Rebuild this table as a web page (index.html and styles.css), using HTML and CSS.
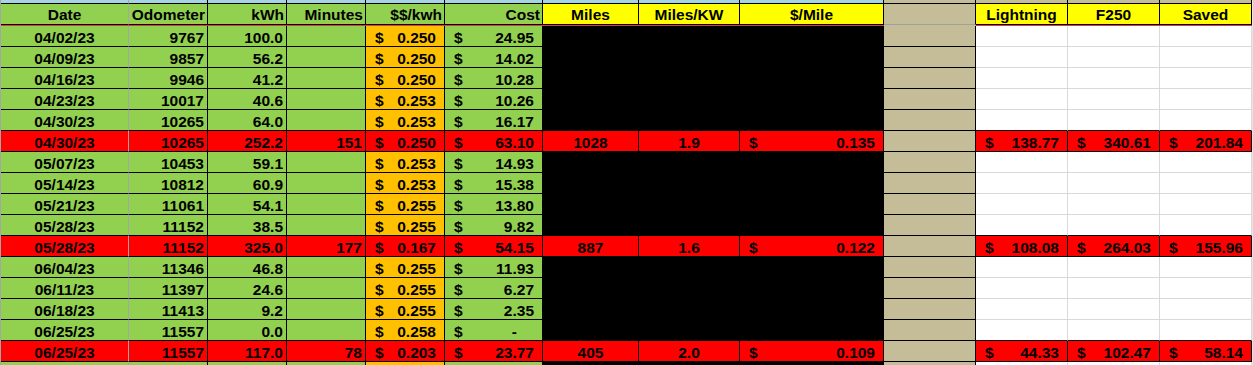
FILE: index.html
```html
<!DOCTYPE html>
<html>
<head>
<meta charset="utf-8">
<link rel="stylesheet" href="styles.css">
</head>
<body>
<div class="sheet">
  <div class="row strip">
    <div class="c first blue"></div><div class="c blue"></div><div class="c blue"></div><div class="c blue"></div><div class="c blue"></div><div class="c blue"></div><div class="c blue"></div><div class="c blue"></div><div class="c blue"></div><div class="c tan"></div><div class="c tan"></div><div class="c tan"></div><div class="c tan"></div>
  </div>
  <div class="row head">
    <div class="c first green ctr">Date</div>
    <div class="c green rt">Odometer</div>
    <div class="c green rt">kWh</div>
    <div class="c green rt">Minutes</div>
    <div class="c green rt">$$/kwh</div>
    <div class="c green rt">Cost</div>
    <div class="c yellow ctr">Miles</div>
    <div class="c yellow ctr">Miles/KW</div>
    <div class="c yellow ctr">$/Mile</div>
    <div class="c tan hj"></div>
    <div class="c yellow ctr">Lightning</div>
    <div class="c yellow ctr">F250</div>
    <div class="c yellow ctr">Saved</div>
  </div>
  <div class="row redline">
    <div class="ln"></div><div class="ln"></div><div class="ln"></div><div class="ln"></div><div class="ln"></div><div class="ln"></div><div class="ln"></div><div class="ln"></div><div class="ln"></div><div class="ln lt"></div><div class="ln"></div><div class="ln"></div><div class="ln"></div>
  </div>

  <div class="row">
    <div class="c first green ctr">04/02/23</div><div class="c green rt">9767</div><div class="c green rt">100.0</div><div class="c green rt"></div>
    <div class="c orange acc"><span>$</span><span>0.250</span></div><div class="c green acc"><span>$</span><span>24.95</span></div>
    <div class="blk"></div><div class="c tan"></div><div class="c wh"></div><div class="c wh"></div><div class="c wh"></div>
  </div>
  <div class="row">
    <div class="c first green ctr">04/09/23</div><div class="c green rt">9857</div><div class="c green rt">56.2</div><div class="c green rt"></div>
    <div class="c orange acc"><span>$</span><span>0.250</span></div><div class="c green acc"><span>$</span><span>14.02</span></div>
    <div class="blk"></div><div class="c tan"></div><div class="c wh"></div><div class="c wh"></div><div class="c wh"></div>
  </div>
  <div class="row">
    <div class="c first green ctr">04/16/23</div><div class="c green rt">9946</div><div class="c green rt">41.2</div><div class="c green rt"></div>
    <div class="c orange acc"><span>$</span><span>0.250</span></div><div class="c green acc"><span>$</span><span>10.28</span></div>
    <div class="blk"></div><div class="c tan"></div><div class="c wh"></div><div class="c wh"></div><div class="c wh"></div>
  </div>
  <div class="row">
    <div class="c first green ctr">04/23/23</div><div class="c green rt">10017</div><div class="c green rt">40.6</div><div class="c green rt"></div>
    <div class="c orange acc"><span>$</span><span>0.253</span></div><div class="c green acc"><span>$</span><span>10.26</span></div>
    <div class="blk"></div><div class="c tan"></div><div class="c wh"></div><div class="c wh"></div><div class="c wh"></div>
  </div>
  <div class="row pre">
    <div class="c first green ctr">04/30/23</div><div class="c green rt">10265</div><div class="c green rt">64.0</div><div class="c green rt"></div>
    <div class="c orange acc"><span>$</span><span>0.253</span></div><div class="c green acc"><span>$</span><span>16.17</span></div>
    <div class="blk"></div><div class="c tan"></div><div class="c wh"></div><div class="c wh"></div><div class="c wh"></div>
  </div>
  <div class="row">
    <div class="c first red ctr">04/30/23</div><div class="c red rt">10265</div><div class="c red rt">252.2</div><div class="c red rt">151</div>
    <div class="c red acc"><span>$</span><span>0.250</span></div><div class="c red acc"><span>$</span><span>63.10</span></div>
    <div class="c red ctr">1028</div><div class="c red ctr">1.9</div><div class="c red acc"><span>$</span><span>0.135</span></div>
    <div class="c tan"></div>
    <div class="c red acc"><span>$</span><span>138.77</span></div><div class="c red acc"><span>$</span><span>340.61</span></div><div class="c red acc"><span>$</span><span>201.84</span></div>
  </div>

  <div class="row">
    <div class="c first green ctr">05/07/23</div><div class="c green rt">10453</div><div class="c green rt">59.1</div><div class="c green rt"></div>
    <div class="c orange acc"><span>$</span><span>0.253</span></div><div class="c green acc"><span>$</span><span>14.93</span></div>
    <div class="blk"></div><div class="c tan"></div><div class="c wh"></div><div class="c wh"></div><div class="c wh"></div>
  </div>
  <div class="row">
    <div class="c first green ctr">05/14/23</div><div class="c green rt">10812</div><div class="c green rt">60.9</div><div class="c green rt"></div>
    <div class="c orange acc"><span>$</span><span>0.253</span></div><div class="c green acc"><span>$</span><span>15.38</span></div>
    <div class="blk"></div><div class="c tan"></div><div class="c wh"></div><div class="c wh"></div><div class="c wh"></div>
  </div>
  <div class="row">
    <div class="c first green ctr">05/21/23</div><div class="c green rt">11061</div><div class="c green rt">54.1</div><div class="c green rt"></div>
    <div class="c orange acc"><span>$</span><span>0.255</span></div><div class="c green acc"><span>$</span><span>13.80</span></div>
    <div class="blk"></div><div class="c tan"></div><div class="c wh"></div><div class="c wh"></div><div class="c wh"></div>
  </div>
  <div class="row pre">
    <div class="c first green ctr">05/28/23</div><div class="c green rt">11152</div><div class="c green rt">38.5</div><div class="c green rt"></div>
    <div class="c orange acc"><span>$</span><span>0.255</span></div><div class="c green acc"><span>$</span><span>9.82</span></div>
    <div class="blk"></div><div class="c tan"></div><div class="c wh"></div><div class="c wh"></div><div class="c wh"></div>
  </div>
  <div class="row">
    <div class="c first red ctr">05/28/23</div><div class="c red rt">11152</div><div class="c red rt">325.0</div><div class="c red rt">177</div>
    <div class="c red acc"><span>$</span><span>0.167</span></div><div class="c red acc"><span>$</span><span>54.15</span></div>
    <div class="c red ctr">887</div><div class="c red ctr">1.6</div><div class="c red acc"><span>$</span><span>0.122</span></div>
    <div class="c tan"></div>
    <div class="c red acc"><span>$</span><span>108.08</span></div><div class="c red acc"><span>$</span><span>264.03</span></div><div class="c red acc"><span>$</span><span>155.96</span></div>
  </div>

  <div class="row">
    <div class="c first green ctr">06/04/23</div><div class="c green rt">11346</div><div class="c green rt">46.8</div><div class="c green rt"></div>
    <div class="c orange acc"><span>$</span><span>0.255</span></div><div class="c green acc"><span>$</span><span>11.93</span></div>
    <div class="blk"></div><div class="c tan"></div><div class="c wh"></div><div class="c wh"></div><div class="c wh"></div>
  </div>
  <div class="row">
    <div class="c first green ctr">06/11/23</div><div class="c green rt">11397</div><div class="c green rt">24.6</div><div class="c green rt"></div>
    <div class="c orange acc"><span>$</span><span>0.255</span></div><div class="c green acc"><span>$</span><span>6.27</span></div>
    <div class="blk"></div><div class="c tan"></div><div class="c wh"></div><div class="c wh"></div><div class="c wh"></div>
  </div>
  <div class="row">
    <div class="c first green ctr">06/18/23</div><div class="c green rt">11413</div><div class="c green rt">9.2</div><div class="c green rt"></div>
    <div class="c orange acc"><span>$</span><span>0.255</span></div><div class="c green acc"><span>$</span><span>2.35</span></div>
    <div class="blk"></div><div class="c tan"></div><div class="c wh"></div><div class="c wh"></div><div class="c wh"></div>
  </div>
  <div class="row pre">
    <div class="c first green ctr">06/25/23</div><div class="c green rt">11557</div><div class="c green rt">0.0</div><div class="c green rt"></div>
    <div class="c orange acc"><span>$</span><span>0.258</span></div><div class="c green acc"><span>$</span><span class="dash">-</span></div>
    <div class="blk"></div><div class="c tan"></div><div class="c wh"></div><div class="c wh"></div><div class="c wh"></div>
  </div>
  <div class="row">
    <div class="c first red ctr">06/25/23</div><div class="c red rt">11557</div><div class="c red rt">117.0</div><div class="c red rt">78</div>
    <div class="c red acc"><span>$</span><span>0.203</span></div><div class="c red acc"><span>$</span><span>23.77</span></div>
    <div class="c red ctr">405</div><div class="c red ctr">2.0</div><div class="c red acc"><span>$</span><span>0.109</span></div>
    <div class="c tan"></div>
    <div class="c red acc"><span>$</span><span>44.33</span></div><div class="c red acc"><span>$</span><span>102.47</span></div><div class="c red acc"><span>$</span><span>58.14</span></div>
  </div>

  <div class="row">
    <div class="c first green"></div><div class="c green"></div><div class="c green"></div><div class="c green"></div>
    <div class="c orange"></div><div class="c green"></div>
    <div class="blk"></div><div class="c tan"></div><div class="c wh"></div><div class="c wh"></div><div class="c wh"></div>
  </div>
</div>
</body>
</html>
```

FILE: styles.css
```css
html, body {
  margin: 0;
  padding: 0;
  background: #ffffff;
  overflow: hidden;
}

body {
  font-family: "Liberation Sans", Arial, sans-serif;
  font-weight: bold;
  font-size: 15.5px;
  color: #000;
}

.sheet {
  --cols: 128px 79px 79px 79px 79px 98px 96px 101px 144px 92px 92px 92px 92px;
  width: 1251px;
  border-left: 1px solid #a6a6a6;
  border-right: 1px solid #e6e6e6;
}

.row {
  display: grid;
  grid-template-columns: var(--cols);
  height: 21px;
}

.strip { height: 3px; }
.head { height: 22px; }
.redline { height: 1px; }

.c {
  box-sizing: border-box;
  border-right: 1px solid #000;
  border-bottom: 1px solid #000;
  display: flex;
  align-items: flex-end;
  line-height: 14px;
  padding-bottom: 1px;
  white-space: nowrap;
  overflow: hidden;
  min-width: 0;
}

.strip .c {
  border-bottom: 0;
  padding: 0;
}

.head .c {
  border-top: 1px solid #000;
  padding-bottom: 2px;
}

.c.first { border-right-color: #a6a6a6; }

.ctr { justify-content: center; }
.rt { justify-content: flex-end; padding-right: 3px; }
.head .rt { padding-right: 2px; }

.acc {
  justify-content: space-between;
  padding-left: 9px;
  padding-right: 8px;
}

.dash { margin-right: 17px; }

.blue { background: #a5d5e3; }
.green { background: #92d050; }
.orange { background: #ffc000; }
.red { background: #ff0000; }
.yellow { background: #ffff00; }
.tan { background: #c4bd97; }

.hj { border-bottom-color: #a0a0a0; }

.wh {
  background: #ffffff;
  border-right-color: #d9d9d9;
  border-bottom-color: #d9d9d9;
}

.pre .wh { border-bottom-color: #000; }

.blk {
  grid-column: span 3;
  background: #000;
}

.ln { background: #e23a34; }
.ln.lt { background: #c4bd97; }
```
